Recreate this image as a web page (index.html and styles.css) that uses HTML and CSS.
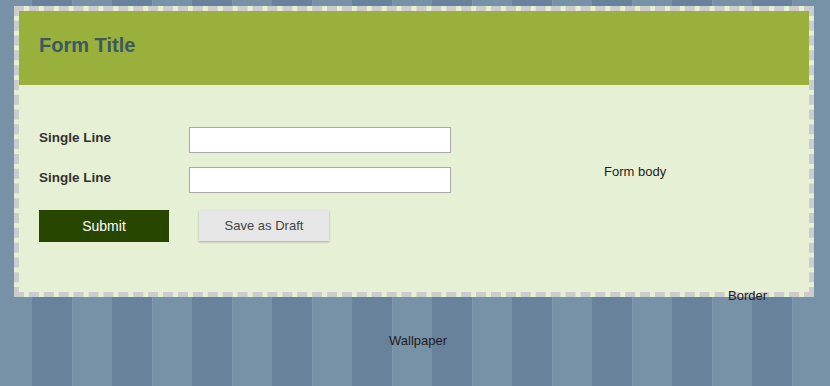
FILE: index.html
```html
<!DOCTYPE html>
<html lang="en">
<head>
  <meta charset="UTF-8">
  <title>Form Title</title>
  <link rel="stylesheet" href="styles.css">
</head>
<body>
  <div class="wallpaper">
    <form class="form">
      <div class="form-head">
        <h1>Form Title</h1>
      </div>
      <div class="form-body">
        <div class="row">
          <label for="line1">Single Line</label>
          <input type="text" id="line1">
        </div>
        <div class="row">
          <label for="line2">Single Line</label>
          <input type="text" id="line2">
        </div>
        <div class="actions">
          <button type="button" class="submit">Submit</button>
          <button type="button" class="draft">Save as Draft</button>
        </div>
      </div>
    </form>
    <span class="note note-body">Form body</span>
    <span class="note note-border">Border</span>
    <span class="note note-wallpaper">Wallpaper</span>
  </div>
</body>
</html>
```

FILE: styles.css
```css
body {
  margin: 0;
  font-family: "Liberation Sans", Arial, sans-serif;
}
.wallpaper {
  position: relative;
  height: 386px;
  padding: 6px 0 0 14px;
  box-sizing: border-box;
  overflow: hidden;
  background: repeating-linear-gradient(90deg,
    #7791a6 0 32px,
    #67829a 32px 72px,
    #7e98ad 72px 73px,
    #7791a6 73px 80px);
}
.form {
  width: 800px;
  height: 291px;
  box-sizing: border-box;
  border: 5px dashed #cccccc;
  background: #e6f0d4;
  margin: 0;
}
.form-head {
  height: 74px;
  box-sizing: border-box;
  padding: 23px 20px 0;
  background: #9ab03d;
}
.form-head h1 {
  margin: 0;
  font-size: 20px;
  line-height: 23px;
  font-weight: bold;
  color: #3b5a5e;
}
.form-body {
  display: flex;
  flex-direction: column;
  gap: 14px;
  padding: 42px 20px 0;
}
.row {
  display: flex;
  align-items: flex-start;
}
.row label {
  width: 150px;
  padding-top: 3px;
  font-size: 13.5px;
  line-height: 16px;
  font-weight: bold;
  color: #333;
}
.row input {
  width: 262px;
  height: 26px;
  box-sizing: border-box;
  margin: 0;
  border: 1px solid #a9a9a9;
  background: #fff;
}
.actions {
  display: flex;
  gap: 30px;
  margin-top: 3px;
}
.actions button {
  width: 130px;
  height: 32px;
  margin: 0;
  border: 0;
  font-family: "Liberation Sans", Arial, sans-serif;
}
.submit {
  background: #274600;
  color: #fff;
  font-size: 14px;
}
.draft {
  height: 31px !important;
  background: #e6e6e6;
  color: #444;
  font-size: 13px;
  box-shadow: 0 1px 2px rgba(0, 0, 0, 0.3);
}
.note {
  position: absolute;
  font-size: 13px;
  line-height: 15px;
  color: #1e1e1e;
}
.note-body {
  left: 604px;
  top: 164px;
}
.note-border {
  left: 728px;
  top: 288px;
}
.note-wallpaper {
  left: 389px;
  top: 333px;
}
```
